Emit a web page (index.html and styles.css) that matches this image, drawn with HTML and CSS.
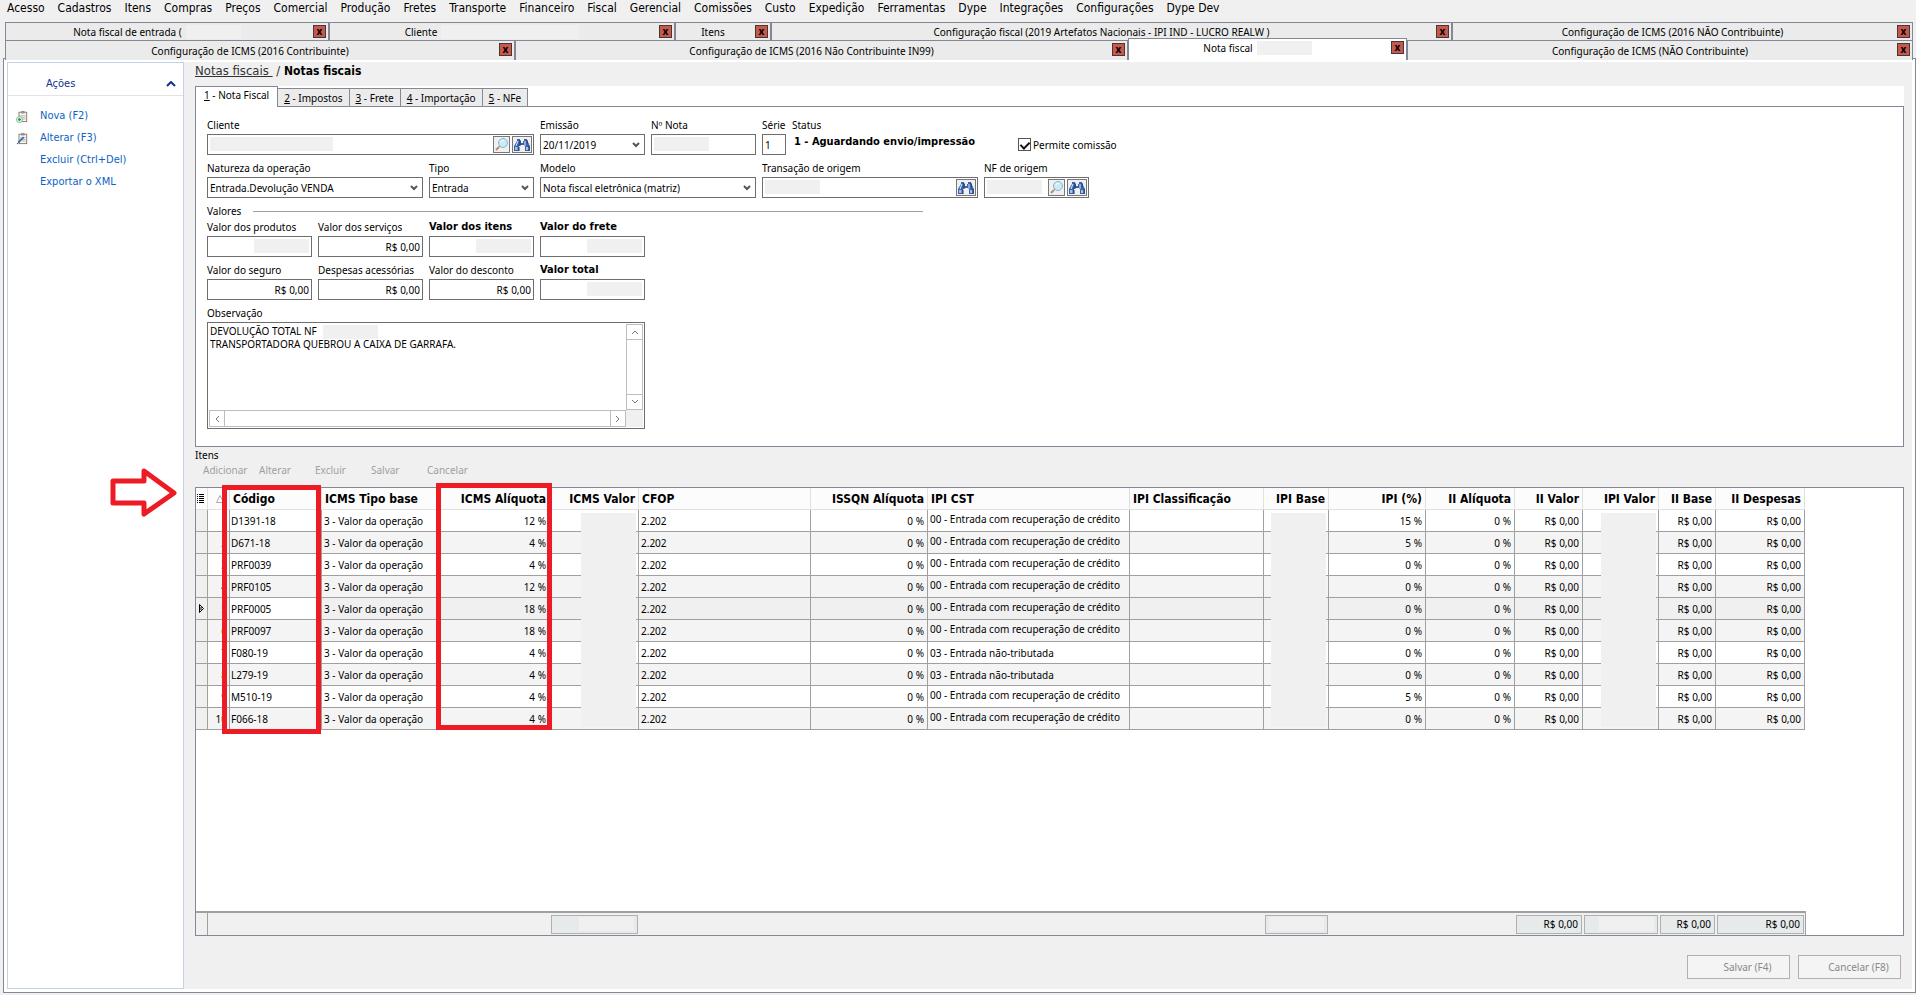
FILE: index.html
```
<!DOCTYPE html>
<html lang="pt-BR">

<head>
    <meta charset="utf-8">
    <meta name="viewport" content="width=device-width, initial-scale=1.0">
    <title>Nota fiscal</title>
    <link rel="stylesheet" href="styles.css">
</head>

<body>
    <!-- icones usados mais de uma vez -->
    <svg class="sprite" aria-hidden="true">
        <symbol id="seta" viewBox="0 0 8 6">
            <path d="M1 1 L4 4 L7 1" fill="none" stroke="currentColor" stroke-width="2" />
        </symbol>
        <symbol id="lupa" viewBox="0 0 15 15">
            <path d="M5 10 L2 13" stroke="#c08a5c" stroke-width="2" />
            <path d="M6 9 L4 11" stroke="#8a93a0" stroke-width="1" />
            <circle cx="9" cy="6" r="4.5" fill="#c9ebf8" stroke="#8fb0cc" />
            <path d="M6.500 5 Q8 3 10 3.500" fill="none" stroke="#fff" />
        </symbol>
        <symbol id="binoculo" viewBox="0 0 18 15">
            <path d="M4 2 h3 v2 h1 v2 h2 v-2 h1 v-2 h3 v2 l3 5 v5 h-5 v-5 h-1 v-1 h-4 v1 h-1 v5 h-5 v-5 l3 -5z" fill="#3a62a8" />
            <path d="M2 10 h3 v3 h-3z M13 10 h3 v3 h-3z" fill="#6f93cc" />
            <path d="M5 4 l-2 5 M12 4 v5 M3 10 v3 M14 10 v3" stroke="#e4eefb" stroke-width="1" fill="none" />
            <path d="M7 3 v6 M14 3 l1 4 M6 10 v4 M16 9 v5" stroke="#1f3b75" stroke-width="1" fill="none" />
        </symbol>
        <symbol id="prancheta" viewBox="0 0 14 15">
            <rect x="3.500" y="2.500" width="9" height="11" fill="#f7f7f4" stroke="#8b6b4e" />
            <rect x="6" y="1" width="4" height="3" fill="#8d949c" />
            <path d="M5 6.500 h6 M5 8.500 h6 M7 10.500 h4" stroke="#a9b2bb" />
        </symbol>
    </svg>

    <nav class="menu">
        <button>Acesso</button>
        <button>Cadastros</button>
        <button>Itens</button>
        <button>Compras</button>
        <button>Preços</button>
        <button>Comercial</button>
        <button>Produção</button>
        <button>Fretes</button>
        <button>Transporte</button>
        <button>Financeiro</button>
        <button>Fiscal</button>
        <button>Gerencial</button>
        <button>Comissões</button>
        <button>Custo</button>
        <button>Expedição</button>
        <button>Ferramentas</button>
        <button>Dype</button>
        <button>Integrações</button>
        <button>Configurações</button>
        <button>Dype Dev</button>
    </nav>

    <div class="janelas linha1">
        <div class="janela"><span>Nota fiscal de entrada (</span><i class="tarja"></i><button class="fechar">x</button></div>
        <div class="janela"><span>Cliente</span><i class="tarja longa"></i><button class="fechar">x</button></div>
        <div class="janela"><span>Itens</span><button class="fechar">x</button></div>
        <div class="janela"><span>Configuração fiscal (2019 Artefatos Nacionais - IPI IND - LUCRO REALW )</span><button class="fechar">x</button></div>
        <div class="janela"><span>Configuração de ICMS (2016 NÃO Contribuinte)</span><button class="fechar">x</button></div>
    </div>
    <div class="janelas linha2">
        <div class="janela"><span>Configuração de ICMS (2016 Contribuinte)</span><button class="fechar">x</button></div>
        <div class="janela"><span>Configuração de ICMS (2016 Não Contribuinte IN99)</span><button class="fechar">x</button></div>
        <div class="janela ativa"><span>Nota fiscal</span><i class="tarja"></i><button class="fechar">x</button></div>
        <div class="janela"><span>Configuração de ICMS (NÃO Contribuinte)</span><button class="fechar">x</button></div>
    </div>

    <div class="quadro">
        <aside class="acoes">
            <header>
                <h2>Ações</h2>
                <svg width="10" height="6" viewBox="0 0 10 6"><path d="M1 5 L5 1 L9 5" fill="none" stroke="#15308c" stroke-width="2" /></svg>
            </header>
            <ul>
                <li>
                    <svg width="14" height="15" viewBox="0 0 14 15"><use href="#prancheta" /><circle cx="4" cy="11" r="3.500" fill="#fff" stroke="#6bb58a" /><path d="M4 9 v4 M2 11 h4" stroke="#2d9a5b" stroke-width="1.500" /></svg>
                    <a href="#nova">Nova (F2)</a>
                </li>
                <li>
                    <svg width="14" height="15" viewBox="0 0 14 15"><use href="#prancheta" /><path d="M9 6 L3 12" stroke="#2a6db5" stroke-width="2" /><path d="M3 12 L1 14" stroke="#1c3556" /></svg>
                    <a href="#alterar">Alterar (F3)</a>
                </li>
                <li><a href="#excluir">Excluir (Ctrl+Del)</a></li>
                <li><a href="#xml">Exportar o XML</a></li>
            </ul>
        </aside>

        <main>
            <h1><a href="#notas">Notas fiscais </a> <span>/</span> Notas fiscais</h1>

            <div class="abas">
                <button class="ativa"><u>1</u> - Nota Fiscal</button>
                <button><u>2</u> - Impostos</button>
                <button><u>3</u> - Frete</button>
                <button><u>4</u> - Importação</button>
                <button><u>5</u> - NFe</button>
            </div>

            <form class="painel">
                <div class="campos">
                    <div class="campo tres">
                        <label for="cliente">Cliente</label>
                        <div class="caixa">
                            <input id="cliente" type="text">
                            <i class="tarja cliente"></i>
                            <div class="botoes">
                                <button type="button" class="lupa" aria-label="Ver cliente"><svg width="15" height="15"><use href="#lupa" /></svg></button>
                                <button type="button" class="busca" aria-label="Buscar cliente"><svg width="18" height="15"><use href="#binoculo" /></svg></button>
                            </div>
                        </div>
                    </div>
                    <div class="campo">
                        <label for="emissao">Emissão</label>
                        <div class="caixa">
                            <select id="emissao"><option>20/11/2019</option></select>
                            <svg class="seta" width="8" height="6"><use href="#seta" /></svg>
                        </div>
                    </div>
                    <div class="campo">
                        <label for="numero">Nº Nota</label>
                        <div class="caixa"><input id="numero" type="text"><i class="tarja"></i></div>
                    </div>
                    <div class="dupla">
                        <div class="campo serie">
                            <label for="serie">Série</label>
                            <div class="caixa"><input id="serie" type="text" value="1"></div>
                        </div>
                        <div class="campo status">
                            <label for="status">Status</label>
                            <output id="status">1 - Aguardando envio/impressão</output>
                        </div>
                    </div>
                    <div class="comissao">
                        <input type="checkbox" id="comissao" checked>
                        <label for="comissao">Permite comissão</label>
                    </div>

                    <div class="campo dois">
                        <label for="natureza">Natureza da operação</label>
                        <div class="caixa">
                            <select id="natureza"><option>Entrada.Devolução VENDA</option></select>
                            <svg class="seta" width="8" height="6"><use href="#seta" /></svg>
                        </div>
                    </div>
                    <div class="campo">
                        <label for="tipo">Tipo</label>
                        <div class="caixa">
                            <select id="tipo"><option>Entrada</option></select>
                            <svg class="seta" width="8" height="6"><use href="#seta" /></svg>
                        </div>
                    </div>
                    <div class="campo dois">
                        <label for="modelo">Modelo</label>
                        <div class="caixa">
                            <select id="modelo"><option>Nota fiscal eletrônica (matriz)</option></select>
                            <svg class="seta" width="8" height="6"><use href="#seta" /></svg>
                        </div>
                    </div>
                    <div class="campo dois">
                        <label for="transacao">Transação de origem</label>
                        <div class="caixa">
                            <input id="transacao" type="text">
                            <i class="tarja"></i>
                            <div class="botoes">
                                <button type="button" class="busca" aria-label="Buscar transação"><svg width="18" height="15"><use href="#binoculo" /></svg></button>
                            </div>
                        </div>
                    </div>
                    <div class="campo">
                        <label for="origem">NF de origem</label>
                        <div class="caixa">
                            <input id="origem" type="text">
                            <i class="tarja"></i>
                            <div class="botoes">
                                <button type="button" class="lupa" aria-label="Ver nota"><svg width="15" height="15"><use href="#lupa" /></svg></button>
                                <button type="button" class="busca" aria-label="Buscar nota"><svg width="18" height="15"><use href="#binoculo" /></svg></button>
                            </div>
                        </div>
                    </div>
                </div>

                <h3 class="divisor">Valores</h3>

                <div class="campos valores">
                    <div class="campo">
                        <label for="produtos">Valor dos produtos</label>
                        <div class="caixa"><input id="produtos" type="text"><i class="tarja"></i></div>
                    </div>
                    <div class="campo">
                        <label for="servicos">Valor dos serviços</label>
                        <div class="caixa"><input id="servicos" type="text" value="R$ 0,00"></div>
                    </div>
                    <div class="campo forte">
                        <label for="itens">Valor dos itens</label>
                        <div class="caixa"><input id="itens" type="text"><i class="tarja"></i></div>
                    </div>
                    <div class="campo forte">
                        <label for="frete">Valor do frete</label>
                        <div class="caixa"><input id="frete" type="text"><i class="tarja"></i></div>
                    </div>
                    <div class="campo">
                        <label for="seguro">Valor do seguro</label>
                        <div class="caixa"><input id="seguro" type="text" value="R$ 0,00"></div>
                    </div>
                    <div class="campo">
                        <label for="despesas">Despesas acessórias</label>
                        <div class="caixa"><input id="despesas" type="text" value="R$ 0,00"></div>
                    </div>
                    <div class="campo">
                        <label for="desconto">Valor do desconto</label>
                        <div class="caixa"><input id="desconto" type="text" value="R$ 0,00"></div>
                    </div>
                    <div class="campo forte">
                        <label for="total">Valor total</label>
                        <div class="caixa"><input id="total" type="text"><i class="tarja"></i></div>
                    </div>
                    <div class="campo obs">
                        <label for="observacao">Observação</label>
                        <div class="memo">
                            <textarea id="observacao" wrap="off">DEVOLUÇÃO TOTAL NF
TRANSPORTADORA QUEBROU A CAIXA DE GARRAFA.</textarea>
                            <i class="tarja"></i>
                            <div class="rolagem vertical">
                                <button type="button" aria-label="Subir"><svg width="8" height="6" viewBox="0 0 8 6"><path d="M1 5 L4 2 L7 5" /></svg></button>
                                <button type="button" aria-label="Descer"><svg width="8" height="6" viewBox="0 0 8 6"><path d="M1 1 L4 4 L7 1" /></svg></button>
                            </div>
                            <div class="rolagem horizontal">
                                <button type="button" aria-label="Esquerda"><svg width="6" height="8" viewBox="0 0 6 8"><path d="M5 1 L2 4 L5 7" /></svg></button>
                                <button type="button" aria-label="Direita"><svg width="6" height="8" viewBox="0 0 6 8"><path d="M1 1 L4 4 L1 7" /></svg></button>
                            </div>
                            <div class="canto"></div>
                        </div>
                    </div>
                </div>
            </form>

            <h3 class="titulo">Itens</h3>
            <div class="ferramentas">
                <button disabled>Adicionar</button>
                <button disabled>Alterar</button>
                <button disabled>Excluir</button>
                <button disabled>Salvar</button>
                <button disabled>Cancelar</button>
            </div>

            <section class="grade">
                <table class="itens">
                    <colgroup></colgroup>
                    <thead>
                        <tr>
                            <th><svg width="8" height="11" viewBox="0 0 8 11"><path d="M0 1.500 h1 M2 1.500 h5 M0 3.500 h1 M2 3.500 h5 M0 5.500 h1 M2 5.500 h5 M0 7.500 h1 M2 7.500 h5 M0 9.500 h1 M2 9.500 h5" stroke="#000" /></svg></th>
                            <th class="ordem"><svg width="8" height="8" viewBox="0 0 8 8"><path d="M0.500 7.500 L4 0.500 L7.500 7.500z" fill="none" stroke="#aaa" /></svg></th>
                            <th>Código</th>
                            <th>ICMS Tipo base</th>
                            <th class="num">ICMS Alíquota</th>
                            <th class="num">ICMS Valor</th>
                            <th>CFOP</th>
                            <th class="num">ISSQN Alíquota</th>
                            <th>IPI CST</th>
                            <th>IPI Classificação</th>
                            <th class="num">IPI Base</th>
                            <th class="num">IPI (%)</th>
                            <th class="num">II Alíquota</th>
                            <th class="num">II Valor</th>
                            <th class="num">IPI Valor</th>
                            <th class="num">II Base</th>
                            <th class="num">II Despesas</th>
                        </tr>
                    </thead>
                    <tbody></tbody>
                </table>

                <table class="totais">
                    <colgroup></colgroup>
                    <tbody>
                        <tr>
                            <td class="marca"></td>
                            <td colspan="4"></td>
                            <td class="total"><div><i></i></div></td>
                            <td colspan="4"></td>
                            <td class="total"><div><i></i></div></td>
                            <td colspan="2"></td>
                            <td class="total"><div>R$ 0,00</div></td>
                            <td class="total"><div><i></i></div></td>
                            <td class="total"><div>R$ 0,00</div></td>
                            <td class="total"><div>R$ 0,00</div></td>
                        </tr>
                    </tbody>
                </table>

                <!-- marcações em vermelho -->
                <div class="destaque codigo"></div>
                <div class="destaque aliquota"></div>
                <svg class="flecha" width="70" height="52" viewBox="0 0 70 52">
                    <path d="M4 14 H35 V4 L65 26 L35 47 V36 H4z" fill="#fff" stroke="#ed1c24" stroke-width="5" stroke-linejoin="round" />
                </svg>
            </section>

            <footer>
                <button disabled>Salvar (F4)</button>
                <button disabled>Cancelar (F8)</button>
            </footer>
        </main>
    </div>

    <script src="script.js"></script>
</body>

</html>
```
FILE: styles.css
```
* {
    box-sizing: border-box;
}

body {
    margin: 0;
    height: 100vh;
    display: flex;
    flex-direction: column;
    background: #f0f0f0;
    color: #000;
    font-family: "Noto Sans", "Open Sans", sans-serif;
    font-size: 10px;
    line-height: 16px;
}

button,
input,
select,
textarea {
    font: inherit;
    color: inherit;
    margin: 0;
    padding: 0;
    border: none;
    border-radius: 0;
    background: none;
    outline: none;
}

h1,
h2,
h3 {
    margin: 0;
    font-size: inherit;
    font-weight: 400;
}

.sprite {
    display: none;
}

/* menu, ações e textos em negrito usam a fonte condensada */
.menu,
.acoes,
h1,
.forte label,
.status output,
.grade th {
    font-family: "DejaVu Sans Condensed", "DejaVu Sans", sans-serif;
}

/* blocos que escondem dados do cliente */
.tarja {
    display: block;
    width: 55px;
    height: 14px;
    background: #f0f0f0;
}

/* menu */
.menu {
    display: flex;
    gap: 13px;
    height: 22px;
    padding: 0 7px;
}

.menu button {
    font-size: 12px;
    line-height: 16px;
    height: 16px;
    white-space: nowrap;
}

/* abas das janelas abertas */
.janelas {
    display: grid;
    height: 18px;
    margin: 0 3px 0 5px;
    line-height: 14px;
}

.linha1 {
    grid-template-columns: 324fr 346fr 96fr 681fr 461fr;
}

.linha2 {
    grid-template-columns: 510fr 613fr 279fr 506fr;
}

.janela {
    display: flex;
    align-items: center;
    justify-content: center;
    gap: 4px;
    position: relative;
    padding-right: 20px;
    border: 1px solid #838796;
    border-bottom: none;
    background: #ebebeb;
    white-space: nowrap;
}

.janela .longa {
    width: 138px;
}

.janela.ativa {
    z-index: 1;
    height: 22px;
    margin-top: -2px;
    padding-bottom: 4px;
    background: #fff;
}

.fechar {
    position: absolute;
    top: 2px;
    right: 2px;
    width: 13px;
    height: 13px;
    border: 1px solid #4d3431;
    background: #c4594d;
    font-size: 10px;
    font-weight: 700;
    line-height: 9px;
}

/* quadro principal */
.quadro {
    flex: 1;
    display: flex;
    gap: 11px;
    margin: 0 0 2px 3px;
    padding: 3px;
    border: 1px solid #838796;
    background: #f0f0f0;
    box-shadow: inset 0 0 0 3px #fff;
}

.acoes {
    width: 177px;
    flex: none;
    border: 1px solid #c3d3e2;
    background: #fff;
}

.acoes header {
    display: flex;
    align-items: center;
    justify-content: space-between;
    height: 33px;
    padding: 10px 7px 0 38px;
    border-bottom: 1px solid #e2e2e8;
}

.acoes h2 {
    font-size: 11px;
    color: #15308c;
}

.acoes ul {
    list-style: none;
    margin: 0;
    padding: 9px 0 0 8px;
}

.acoes li {
    display: flex;
    align-items: center;
    justify-content: flex-end;
    height: 22px;
    gap: 12px;
}

.acoes a {
    width: 143px;
    flex: none;
    font-size: 11px;
    color: #0b62c4;
    text-decoration: none;
}

main {
    flex: 1;
    min-width: 0;
    display: flex;
    flex-direction: column;
    padding-right: 8px;
}

h1 {
    height: 24px;
    font-size: 12px;
    font-weight: 700;
    line-height: 18px;
}

h1 a,
h1 span {
    font-size: 13px;
    font-weight: 400;
    color: #333;
    white-space: pre;
}

.abas {
    display: flex;
    align-items: flex-end;
    height: 21px;
    background: #fff;
}

.abas button {
    height: 19px;
    padding: 0 6px;
    border: 1px solid #838796;
    border-left: none;
    background: #ebebeb;
}

.abas .ativa {
    position: relative;
    height: 21px;
    padding: 0 8px 4px;
    border: 1px solid #838796;
    border-bottom: none;
    background: #fff;
}

.painel {
    margin-top: -1px;
    padding: 10px 11px 17px;
    border: 1px solid #838796;
    background: #fff;
}

.campos {
    display: grid;
    grid-template-columns: repeat(8, 105px);
    gap: 5px 6px;
}

.campos.valores {
    grid-template-columns: repeat(4, 105px);
}

.campo {
    display: flex;
    flex-direction: column;
    gap: 1px;
    min-width: 0;
    white-space: nowrap;
}

.dois,
.dupla {
    grid-column: span 2;
}

.tres {
    grid-column: span 3;
}

.forte label {
    font-size: 11px;
    font-weight: 700;
}

.caixa {
    position: relative;
    height: 21px;
    border: 1px solid #6e6e6e;
    background: #fff;
}

.caixa input,
.caixa select {
    display: block;
    width: 100%;
    height: 19px;
    padding: 0 2px;
    appearance: none;
}

.caixa .tarja {
    position: absolute;
    top: 2px;
    left: 2px;
}

.caixa .cliente {
    width: 123px;
}

.valores input {
    text-align: right;
}

.valores .caixa .tarja {
    left: auto;
    right: 2px;
}

.seta {
    position: absolute;
    top: 7px;
    right: 4px;
    color: #555;
    pointer-events: none;
}

.botoes {
    position: absolute;
    top: 1px;
    right: 1px;
    display: flex;
    gap: 2px;
}

.botoes button {
    height: 17px;
    border: 1px solid #777;
    background: #f0f0f0;
}

.botoes svg {
    display: block;
}

.lupa {
    width: 17px;
}

.busca {
    width: 20px;
}

.dupla {
    display: flex;
    gap: 6px;
}

.serie {
    width: 24px;
}

.status output {
    padding-left: 2px;
    font-size: 11px;
    font-weight: 700;
}

.comissao {
    display: flex;
    align-items: center;
    gap: 2px;
    height: 21px;
    margin: 17px 0 0 34px;
    white-space: nowrap;
}

.comissao input {
    appearance: none;
    width: 13px;
    height: 13px;
    flex: none;
    border: 1px solid #555;
    background: #fff;
}

.comissao input:checked::after {
    content: "";
    display: block;
    width: 4px;
    height: 7px;
    margin: 1px 0 0 3px;
    border: solid #111;
    border-width: 0 2px 2px 0;
    transform: rotate(45deg);
}

.divisor {
    display: flex;
    align-items: center;
    gap: 12px;
    width: 716px;
    margin-top: 5px;
}

.divisor::after {
    content: "";
    flex: 1;
    height: 1px;
    background: #a0a0a0;
}

.obs {
    grid-column: span 4;
}

.memo {
    display: grid;
    grid-template-columns: 1fr 17px;
    grid-template-rows: 1fr 17px;
    position: relative;
    height: 107px;
    padding: 1px;
    border: 1px solid #6e6e6e;
    background: #fff;
}

.memo textarea {
    resize: none;
    overflow: hidden;
    padding: 1px;
    line-height: 13px;
    white-space: pre;
}

.memo .tarja {
    position: absolute;
    top: 2px;
    left: 115px;
}

.rolagem {
    display: flex;
    justify-content: space-between;
    border: 1px solid #bdbdbd;
}

.rolagem button {
    display: flex;
    align-items: center;
    justify-content: center;
    width: 15px;
    height: 15px;
}

.rolagem path {
    fill: none;
    stroke: #777;
}

.vertical {
    flex-direction: column;
}

.vertical button + button {
    border-top: 1px solid #bdbdbd;
}

.vertical button:first-child {
    border-bottom: 1px solid #bdbdbd;
}

.horizontal button + button {
    border-left: 1px solid #bdbdbd;
}

.horizontal button:first-child {
    border-right: 1px solid #bdbdbd;
}

.canto {
    background: #f0f0f0;
}

.titulo {
    height: 15px;
}

.ferramentas {
    display: flex;
    height: 25px;
    padding-left: 8px;
}

.ferramentas button {
    width: 56px;
    height: 16px;
    text-align: left;
    color: #a0a0a0;
}

/* grade de itens */
.grade {
    flex: 1;
    display: flex;
    flex-direction: column;
    justify-content: space-between;
    position: relative;
    border: 1px solid #838796;
    background: #fff;
}

.grade table {
    width: 1609px;
    table-layout: fixed;
    border-collapse: separate;
    border-spacing: 0;
}

.grade th,
.grade td {
    height: 22px;
    padding: 0 3px 0 2px;
    text-align: left;
    white-space: nowrap;
}

.itens th {
    padding-left: 3px;
    border-right: 1px solid #e0e0e0;
    border-bottom: 1px solid #e0e0e0;
    background: #fcfcfc;
    font-size: 12px;
}

.itens th:first-child {
    padding: 0 1px;
}

.itens th svg {
    display: block;
}

.itens .ordem {
    padding-left: 8px;
}

.itens td {
    position: relative;
    border-right: 1px solid #a0a0a0;
    border-bottom: 1px solid #a0a0a0;
}

.itens tr:nth-child(even) td {
    background: #f4f4f4;
}

.itens .atual td {
    background: #f0f0f0;
}

.itens .atual td:nth-child(3) {
    background: #fff;
}

.itens td:first-child,
.itens tr:nth-child(even) td:first-child {
    padding: 0 2px;
    background: #f0f0f0;
}

.itens td:nth-child(2) {
    padding: 0 2px;
    text-align: right;
}

.itens td:nth-child(3) {
    padding-left: 1px;
}

.grade .num {
    text-align: right;
}

.itens .alto {
    padding-bottom: 4px;
}

.itens td .tarja {
    position: absolute;
    z-index: 1;
    top: 3px;
    right: 2px;
    height: 214px;
}

.totais {
    border-top: 2px solid #a0a0a0;
    border-right: 1px solid #a0a0a0;
    background: #f0f0f0;
}

.totais .marca {
    border-right: 1px solid #a0a0a0;
}

.grade .total {
    padding: 0 1px;
}

.total div {
    height: 19px;
    padding: 0 3px;
    border: 1px solid #b0b0b0;
    background: #e6eaeb;
    line-height: 17px;
    text-align: right;
}

.total i {
    display: block;
    height: 14px;
    width: 55px;
    margin: 1px 0 0 auto;
    background: #f0f0f0;
}

.destaque {
    position: absolute;
    z-index: 2;
    border: 5px solid #ed1c24;
}

.codigo {
    top: -3px;
    left: 26px;
    width: 99px;
    height: 249px;
}

.aliquota {
    top: -5px;
    left: 240px;
    width: 116px;
    height: 247px;
}

.flecha {
    position: absolute;
    z-index: 2;
    top: -21px;
    left: -87px;
}

footer {
    display: flex;
    justify-content: flex-end;
    gap: 8px;
    padding: 19px 3px 10px;
}

footer button {
    width: 103px;
    height: 24px;
    padding-left: 18px;
    border: 1px solid #b0b0b0;
    background: #f4f4f4;
    color: #888;
}
```
FILE: script.js
```
const larguras = [12, 22, 92, 115, 113, 89, 172, 117, 202, 134, 65, 97, 89, 68, 76, 57, 89];

const credito = "00 - Entrada com recuperação de crédito";
const naoTributada = "03 - Entrada não-tributada";

// código, ICMS alíquota, IPI CST, IPI (%)
const itens = [
    ["D1391-18", "12 %", credito, "15 %"],
    ["D671-18", "4 %", credito, "5 %"],
    ["PRF0039", "4 %", credito, "0 %"],
    ["PRF0105", "12 %", credito, "0 %"],
    ["PRF0005", "18 %", credito, "0 %"],
    ["PRF0097", "18 %", credito, "0 %"],
    ["F080-19", "4 %", naoTributada, "0 %"],
    ["L279-19", "4 %", naoTributada, "0 %"],
    ["M510-19", "4 %", credito, "5 %"],
    ["F066-18", "4 %", credito, "0 %"]
];
const atual = 4;

document.querySelectorAll("colgroup").forEach(grupo => {
    grupo.innerHTML = larguras.map(l => `<col style="width: ${l}px">`).join("");
});

const ponteiro = '<svg width="7" height="9" viewBox="0 0 7 9"><path d="M1.5 0.5 L5.5 4.500 L1.5 8.500z M3 3 v3" fill="none" stroke="#000"/></svg>';

document.querySelector(".itens tbody").innerHTML = itens.map(([codigo, icms, cst, ipi], i) => {
    const tarja = i == 0 ? '<i class="tarja"></i>' : "";
    return `<tr class="${i == atual ? "atual" : ""}">
        <td>${i == atual ? ponteiro : ""}</td>
        <td>${i + 1}</td>
        <td>${codigo}</td>
        <td>3 - Valor da operação</td>
        <td class="num">${icms}</td>
        <td>${tarja}</td>
        <td>2.202</td>
        <td class="num">0 %</td>
        <td class="${cst == credito ? "alto" : ""}">${cst}</td>
        <td></td>
        <td>${tarja}</td>
        <td class="num">${ipi}</td>
        <td class="num">0 %</td>
        <td class="num">R$ 0,00</td>
        <td>${tarja}</td>
        <td class="num">R$ 0,00</td>
        <td class="num">R$ 0,00</td>
    </tr>`;
}).join("");
```
